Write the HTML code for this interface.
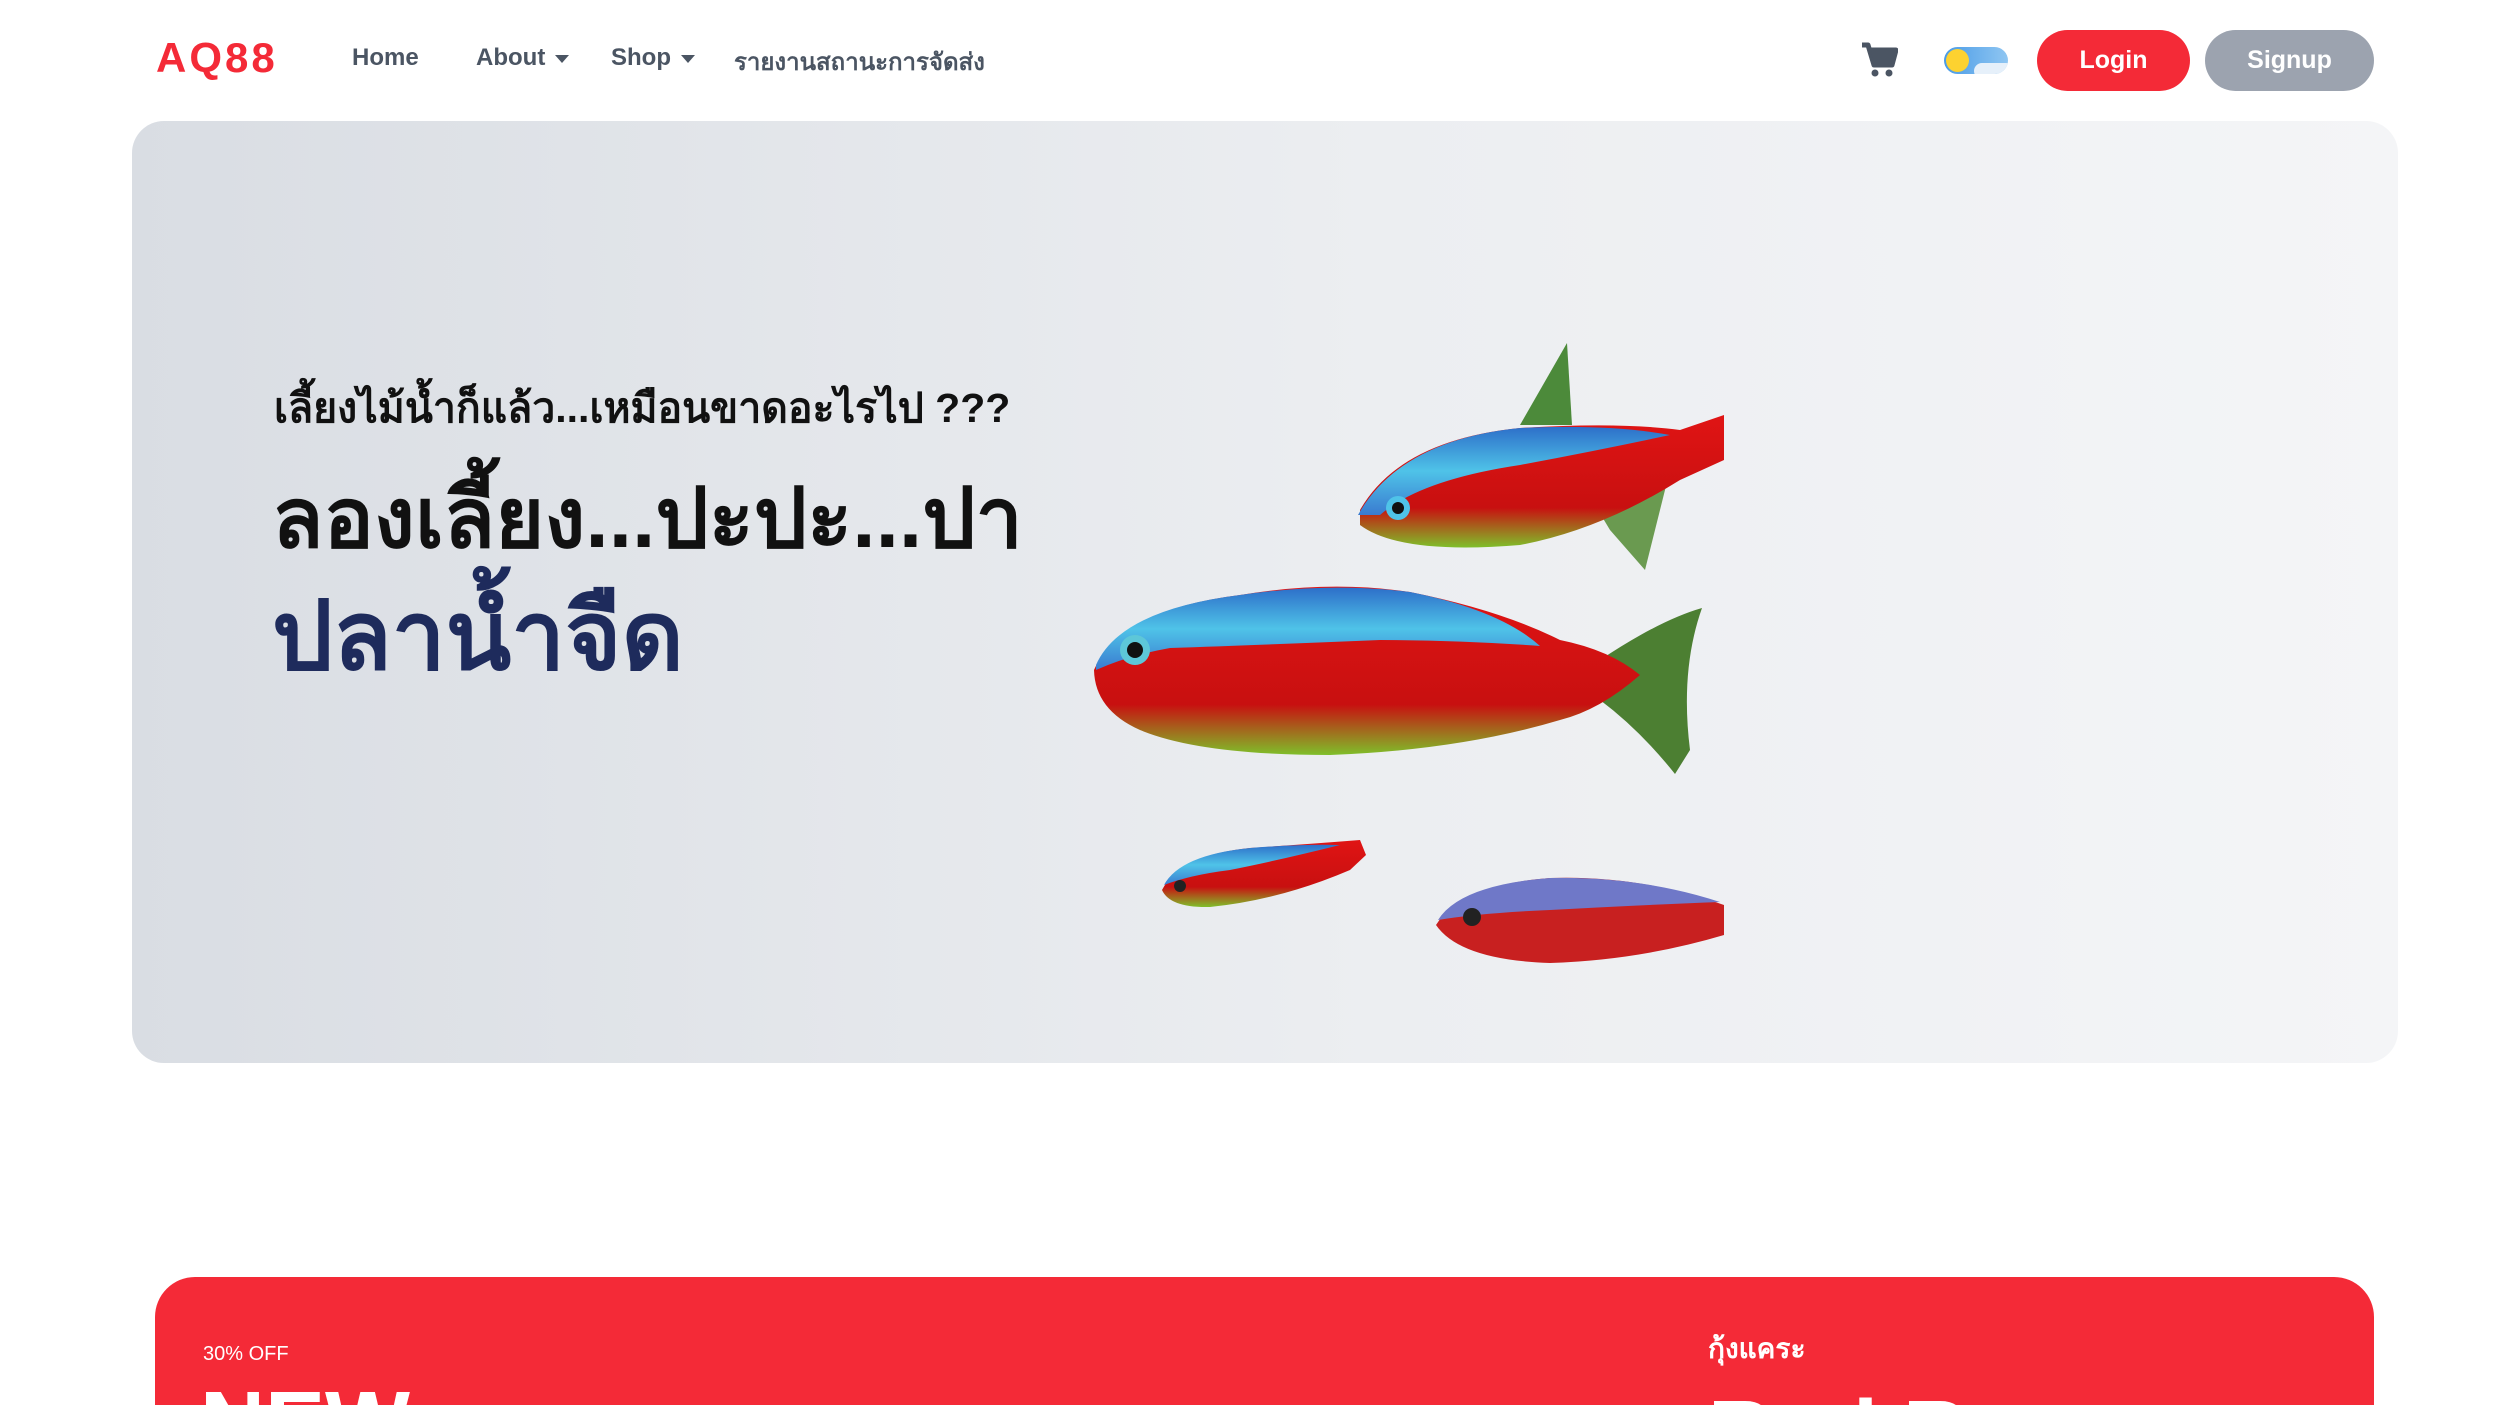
<!DOCTYPE html>
<html><head><meta charset="utf-8"><style>
*{margin:0;padding:0;box-sizing:border-box}
html,body{width:2516px;height:1405px;overflow:hidden}
body{background:#fff;font-family:"Liberation Sans","DejaVu Sans",sans-serif;position:relative}
.a{position:absolute;white-space:nowrap}
.nav{font-size:24px;font-weight:bold;color:#4b5563;top:44px}
.btn{position:absolute;top:30px;height:61px;border-radius:31px;color:#fff;font-size:25px;font-weight:bold;display:flex;align-items:center;justify-content:center}
.hero{position:absolute;left:132px;top:121px;width:2266px;height:942px;border-radius:32px;background:linear-gradient(90deg,#d9dde3,#eceef1 55%,#f4f5f7)}
.red{position:absolute;left:155px;top:1277px;width:2219px;height:128px;border-radius:40px 40px 0 0;background:#f42a37;overflow:hidden}
.tri{border-left:7px solid transparent;border-right:7px solid transparent;border-top:8px solid #4b5563;display:inline-block;vertical-align:middle;margin-left:10px}
</style></head><body>
<div class="a" style="left:156px;top:34px;font-size:42px;font-weight:bold;color:#f42a37;letter-spacing:3px">AQ88</div>
<div class="a nav" style="left:352px">Home</div>
<div class="a nav" style="left:476px">About<span class="tri"></span></div>
<div class="a nav" style="left:611px">Shop<span class="tri"></span></div>
<div class="a nav" style="left:734px;top:42px">รายงานสถานะการจัดส่ง</div>
<svg class="a" style="left:1860px;top:42px" width="38" height="36" viewBox="0 0 38 36"><path d="M2 3h6l6 20h18l4-15H10" fill="none" stroke="#4b5563" stroke-width="5" stroke-linejoin="round"/><path d="M11 9h24l-4 13H14z" fill="#4b5563"/><circle cx="15" cy="31" r="3.5" fill="#4b5563"/><circle cx="29" cy="31" r="3.5" fill="#4b5563"/></svg>
<div class="a" style="left:1944px;top:47px;width:64px;height:27px;border-radius:14px;background:linear-gradient(90deg,#4a9be6,#8fc6f2);overflow:hidden"><div style="position:absolute;left:2px;top:2px;width:23px;height:23px;border-radius:50%;background:#fdd230"></div><div style="position:absolute;left:30px;top:16px;width:40px;height:16px;border-radius:8px;background:#e6f0fa"></div></div>
<div class="btn" style="left:2037px;width:153px;background:#f42a37">Login</div>
<div class="btn" style="left:2205px;width:169px;background:#9ca3af">Signup</div>
<div class="hero"></div>
<div class="a" style="left:274px;top:376px;font-size:41px;font-weight:bold;color:#111">เลี้ยงไม้น้ำก็แล้ว...เหมือนขาดอะไรไป ???</div>
<div class="a" style="left:272px;top:450px;font-size:84px;font-weight:bold;color:#111">ลองเลี้ยง...ปะปะ...ปา</div>
<div class="a" style="left:272px;top:560px;font-size:96px;font-weight:bold;color:#1e2b5c">ปลาน้ำจืด</div>
<svg class="a" style="left:1080px;top:330px" width="680" height="640" viewBox="0 0 680 640">
<defs>
<linearGradient id="b" x1="0" y1="0" x2="0" y2="1"><stop offset="0" stop-color="#2d6fc9"/><stop offset=".5" stop-color="#4fc3e8"/><stop offset="1" stop-color="#3a7bd0"/></linearGradient>
<linearGradient id="r" x1="0" y1="0" x2="0" y2="1"><stop offset="0" stop-color="#e01414"/><stop offset=".7" stop-color="#c81010"/><stop offset="1" stop-color="#7fbf2a"/></linearGradient>
</defs>
<path d="M440 95 L487 13 L492 95Z" fill="#4c8a3a"/>
<path d="M500 150 L590 140 L565 240 L530 200Z" fill="#6a9a50"/>
<path d="M280 180 Q320 110 440 98 Q540 92 600 100 L644 85 L644 130 L600 150 Q520 200 440 215 Q320 225 280 195Z" fill="url(#r)"/>
<path d="M278 185 Q320 110 440 98 Q530 94 590 105 Q520 120 440 135 Q340 150 300 185Z" fill="url(#b)"/>
<circle cx="318" cy="178" r="12" fill="#4fc3e8"/><circle cx="318" cy="178" r="6" fill="#111"/>
<path d="M520 330 Q580 290 622 278 Q600 340 610 420 L595 444 Q560 400 520 370Z" fill="#4c7f32"/>
<path d="M14 340 Q40 280 160 265 Q250 250 330 262 Q420 280 480 310 Q530 320 560 345 Q520 380 480 390 Q380 420 250 425 Q120 425 60 400 Q15 380 14 340Z" fill="url(#r)"/>
<path d="M16 335 Q40 280 160 265 Q250 252 330 262 Q420 280 460 316 Q380 310 300 310 Q180 315 90 318 Q50 325 16 340Z" fill="url(#b)"/>
<circle cx="55" cy="320" r="15" fill="#5dc7d8"/><circle cx="55" cy="320" r="8" fill="#111"/>
<path d="M82 560 Q100 525 170 518 Q230 514 280 510 L286 525 L270 540 Q200 570 130 577 Q90 578 82 560Z" fill="url(#r)"/>
<path d="M84 555 Q100 525 170 518 Q220 514 260 515 Q200 530 150 540 Q110 545 84 555Z" fill="url(#b)"/>
<circle cx="100" cy="556" r="6" fill="#222"/>
<path d="M356 595 Q380 555 470 548 Q560 545 644 575 L644 605 Q560 630 470 633 Q380 630 356 595Z" fill="#c82020"/>
<path d="M358 590 Q380 555 470 548 Q560 546 640 572 Q560 575 470 580 Q400 583 358 590Z" fill="#6f78c8"/>
<circle cx="392" cy="587" r="9" fill="#222"/>
</svg>
<div class="red">
<div class="a" style="left:48px;top:66px;font-size:20px;color:#fff">30% OFF</div>
<div class="a" style="left:45px;top:96px;font-size:90px;font-weight:bold;color:#fff">NEW</div>
<div class="a" style="left:1553px;top:50px;font-size:28px;font-weight:bold;color:#fff">กุ้งแคระ</div>
<div class="a" style="left:1553px;top:105px;font-size:90px;font-weight:bold;color:#fff">Red R</div>
</div>
</body></html>
